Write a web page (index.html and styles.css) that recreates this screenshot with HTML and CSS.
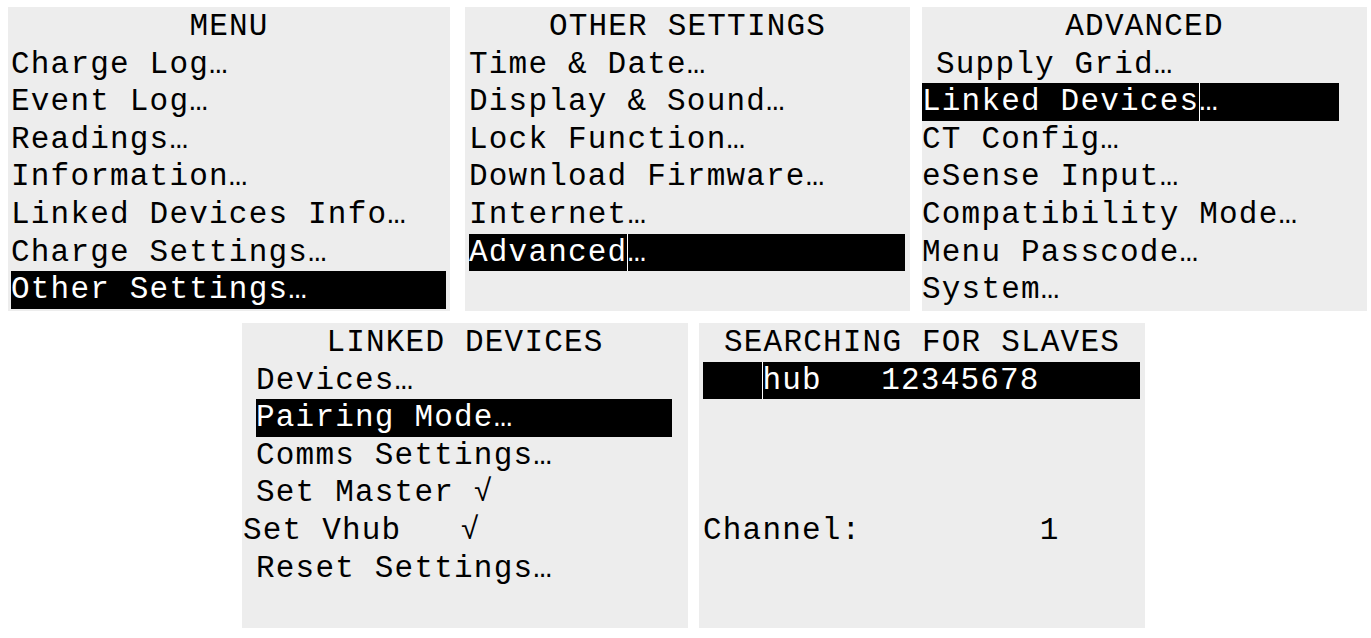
FILE: index.html
```html
<!DOCTYPE html>
<html lang="en">
<head>
<meta charset="utf-8">
<title>Menu screens</title>
<link rel="stylesheet" href="styles.css">
</head>
<body>
<div class="screens">
  <div class="row row-top">
    <section class="panel p-menu">
      <div class="title">MENU</div>
      <div class="item">Charge Log…</div>
      <div class="item">Event Log…</div>
      <div class="item">Readings…</div>
      <div class="item">Information…</div>
      <div class="item">Linked Devices Info…</div>
      <div class="item">Charge Settings…</div>
      <div class="item sel">Other Settings…</div>
    </section>
    <section class="panel p-other">
      <div class="title">OTHER SETTINGS</div>
      <div class="item">Time &amp; Date…</div>
      <div class="item">Display &amp; Sound…</div>
      <div class="item">Lock Function…</div>
      <div class="item">Download Firmware…</div>
      <div class="item">Internet…</div>
      <div class="item sel">Advanced<span class="cursor">…</span></div>
    </section>
    <section class="panel p-adv">
      <div class="title">ADVANCED</div>
      <div class="item indent">Supply Grid…</div>
      <div class="item sel">Linked Devices<span class="cursor">…</span></div>
      <div class="item">CT Config…</div>
      <div class="item">eSense Input…</div>
      <div class="item">Compatibility Mode…</div>
      <div class="item">Menu Passcode…</div>
      <div class="item">System…</div>
    </section>
  </div>
  <div class="row row-bottom">
    <section class="panel p-linked">
      <div class="title">LINKED DEVICES</div>
      <div class="item">Devices…</div>
      <div class="item sel">Pairing Mode…</div>
      <div class="item">Comms Settings…</div>
      <div class="item">Set Master √</div>
      <div class="item outdent">Set Vhub   √</div>
      <div class="item">Reset Settings…</div>
    </section>
    <section class="panel p-search">
      <div class="title">SEARCHING FOR SLAVES</div>
      <div class="item sel">   <span class="cursor">hub   12345678</span></div>
      <div class="item"> </div>
      <div class="item"> </div>
      <div class="item"> </div>
      <div class="item">Channel:         1</div>
    </section>
  </div>
</div>
</body>
</html>
```
FILE: styles.css
```css
html, body {
  margin: 0;
  padding: 0;
  background: #ffffff;
}

.screens {
  padding-top: 7px;
  display: flex;
  flex-direction: column;
  row-gap: 12px;
}

.row {
  display: flex;
}

.row-top {
  padding-left: 8px;
}

.row-bottom {
  padding-left: 242px;
}

.panel {
  box-sizing: border-box;
  background: #ededed;
  color: #000000;
  padding-top: 1px;
  font-family: "Courier New", "Nimbus Mono PS", "FreeMono", "Liberation Mono", monospace;
  font-size: 31px;
  letter-spacing: 1.2px;
  line-height: 37.6px;
  overflow: hidden;
}

.row-top .panel {
  height: 304px;
}

.row-bottom .panel {
  height: 305px;
  width: 446px;
}

.p-menu {
  width: 442px;
}

.p-other {
  width: 445px;
  margin-left: 15px;
}

.p-adv {
  width: 445px;
  margin-left: 12px;
}

.p-search {
  margin-left: 11px;
}

.title {
  text-align: center;
  height: 37.6px;
  white-space: pre;
}

.item {
  height: 37.6px;
  white-space: pre;
}

.sel {
  background: #000000;
  color: #ffffff;
}

.cursor {
  display: inline-block;
  box-shadow: inset 1px 0 0 #ffffff;
}

.p-menu .item {
  margin: 0 4px 0 3px;
}

.p-other .item {
  margin: 0 5px 0 4px;
}

.p-adv .item {
  margin: 0 28px 0 0;
}

.p-adv .indent {
  padding-left: 14px;
}

.p-linked .item {
  margin: 0 16px 0 14px;
}

.p-linked .outdent {
  margin-left: 1px;
}

.p-search .item {
  margin: 0 5px 0 4px;
}
```
